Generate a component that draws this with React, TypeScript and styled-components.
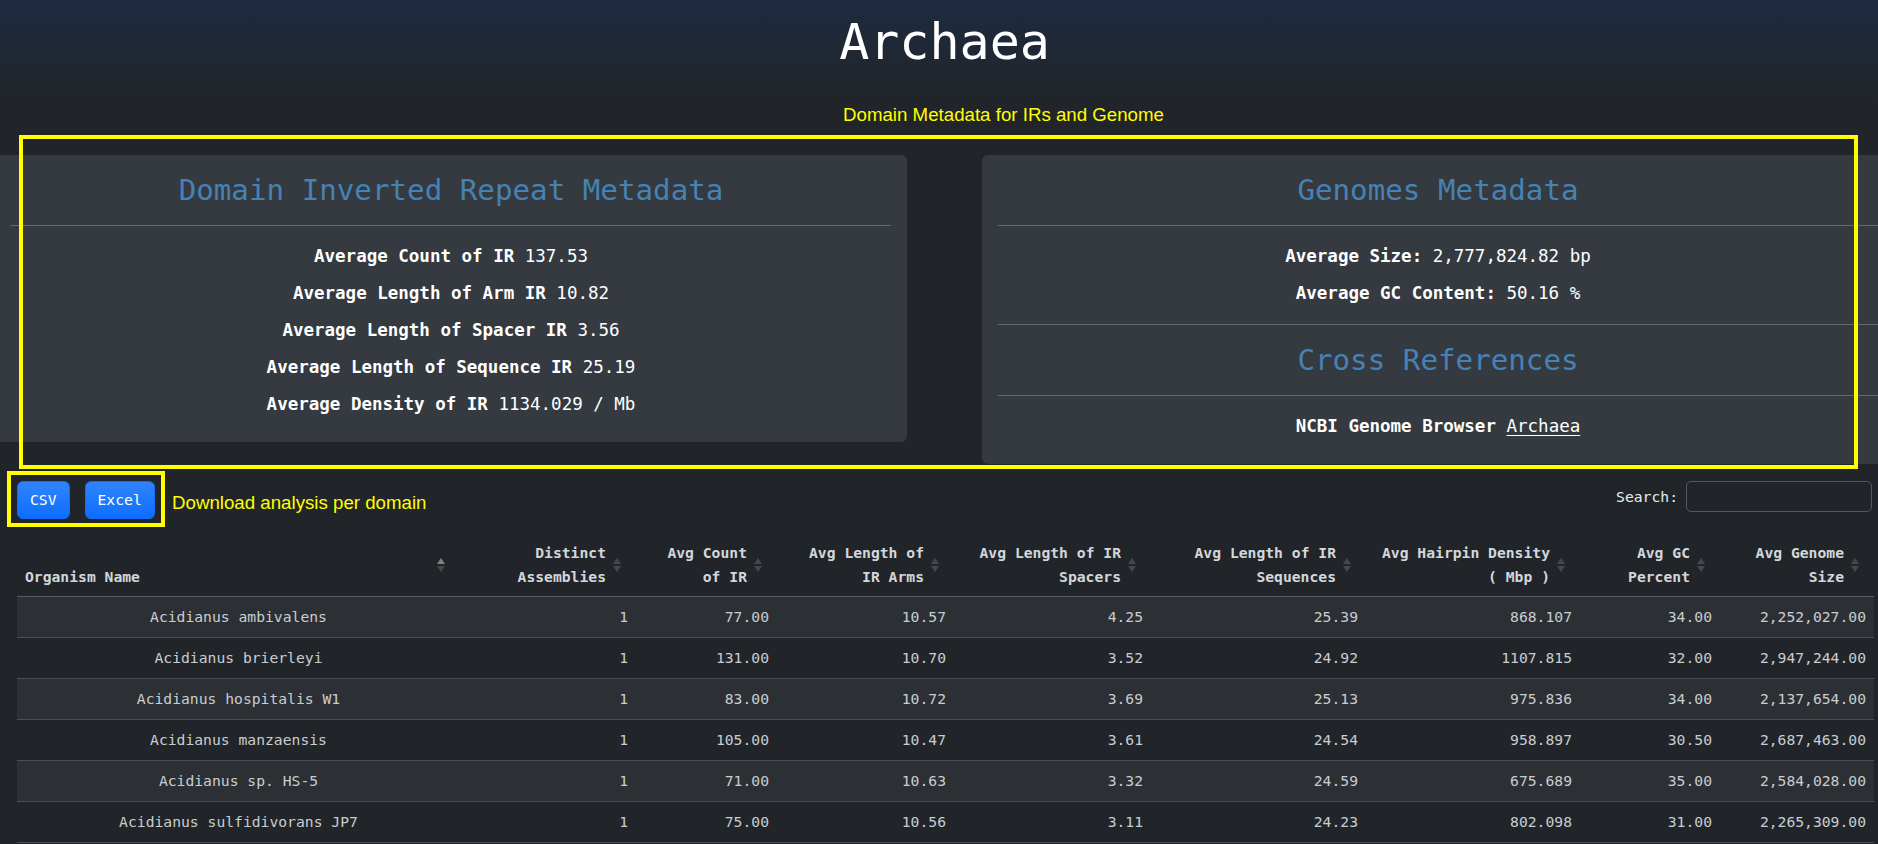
import { FC, Fragment } from 'react'
import styled, { createGlobalStyle } from 'styled-components'

const MONO = `'DejaVu Sans Mono', 'Liberation Mono', monospace`
const NOTE = `'Liberation Sans', Arial, sans-serif`
const YELLOW = '#ffff00'

type Column = { key: string; label: string[]; width: number }

const columns: Column[] = [
  { key: 'name', label: ['Organism Name'], width: 443 },
  { key: 'assemblies', label: ['Distinct', 'Assemblies'], width: 176 },
  { key: 'count', label: ['Avg Count', 'of IR'], width: 141 },
  { key: 'arms', label: ['Avg Length of', 'IR Arms'], width: 177 },
  { key: 'spacers', label: ['Avg Length of IR', 'Spacers'], width: 197 },
  { key: 'sequences', label: ['Avg Length of IR', 'Sequences'], width: 215 },
  { key: 'density', label: ['Avg Hairpin Density', '( Mbp )'], width: 214 },
  { key: 'gc', label: ['Avg GC', 'Percent'], width: 140 },
  { key: 'size', label: ['Avg Genome', 'Size'], width: 154 },
]

const rows: string[][] = [
  ['Acidianus ambivalens', '1', '77.00', '10.57', '4.25', '25.39', '868.107', '34.00', '2,252,027.00'],
  ['Acidianus brierleyi', '1', '131.00', '10.70', '3.52', '24.92', '1107.815', '32.00', '2,947,244.00'],
  ['Acidianus hospitalis W1', '1', '83.00', '10.72', '3.69', '25.13', '975.836', '34.00', '2,137,654.00'],
  ['Acidianus manzaensis', '1', '105.00', '10.47', '3.61', '24.54', '958.897', '30.50', '2,687,463.00'],
  ['Acidianus sp. HS-5', '1', '71.00', '10.63', '3.32', '24.59', '675.689', '35.00', '2,584,028.00'],
  ['Acidianus sulfidivorans JP7', '1', '75.00', '10.56', '3.11', '24.23', '802.098', '31.00', '2,265,309.00'],
]

const irStats = [
  ['Average Count of IR', '137.53'],
  ['Average Length of Arm IR', '10.82'],
  ['Average Length of Spacer IR', '3.56'],
  ['Average Length of Sequence IR', '25.19'],
  ['Average Density of IR', '1134.029 / Mb'],
]

export default function App() {
  return (
    <Screen>
      <GlobalStyle />
      <Page>
        <Header>
          <Title>Archaea</Title>
        </Header>

        <CardRow>
          <Card>
            <CardTitle>Domain Inverted Repeat Metadata</CardTitle>
            <Divider />
            <StatList>
              {irStats.map(([label, value]) => (
                <Stat key={label}>
                  <b>{label}</b> {value}
                </Stat>
              ))}
            </StatList>
          </Card>

          <Card>
            <CardTitle>Genomes Metadata</CardTitle>
            <Divider />
            <StatList>
              <Stat>
                <b>Average Size:</b> 2,777,824.82 bp
              </Stat>
              <Stat>
                <b>Average GC Content:</b> 50.16 %
              </Stat>
            </StatList>
            <Divider $wide />
            <CardTitle>Cross References</CardTitle>
            <Divider />
            <StatList>
              <Stat>
                <b>NCBI Genome Browser</b> <Link href="#">Archaea</Link>
              </Stat>
            </StatList>
          </Card>
        </CardRow>

        <Toolbar>
          <ButtonGroup>
            <ExportButton>CSV</ExportButton>
            <ExportButton>Excel</ExportButton>
          </ButtonGroup>
          <SearchLabel>
            Search:
            <SearchInput type="search" />
          </SearchLabel>
        </Toolbar>

        <ResultsTable />
      </Page>

      <MetadataNote>Domain Metadata for IRs and Genome</MetadataNote>
      <MetadataFrame />
      <DownloadFrame />
      <DownloadNote>Download analysis per domain</DownloadNote>
    </Screen>
  )
}

const ResultsTable: FC = () => (
  <Table>
    <colgroup>
      {columns.map((c) => (
        <col key={c.key} style={{ width: c.width }} />
      ))}
    </colgroup>
    <thead>
      <tr>
        {columns.map((c, i) => (
          <HeadCell key={c.key} $first={i === 0}>
            {c.label.map((line, j) => (
              <Fragment key={line}>
                {j > 0 && <br />}
                {line}
              </Fragment>
            ))}
            <SortIcons>
              <Arrow $up $active={i === 0} />
              <Arrow />
            </SortIcons>
          </HeadCell>
        ))}
      </tr>
    </thead>
    <tbody>
      {rows.map((row) => (
        <Row key={row[0]}>
          {row.map((cell, i) => (
            <Cell key={i} $first={i === 0}>
              {cell}
            </Cell>
          ))}
        </Row>
      ))}
    </tbody>
  </Table>
)

const GlobalStyle = createGlobalStyle`
  html, body {
    margin: 0;
    padding: 0;
    background: #212529;
  }
  body {
    font-family: ${MONO};
    color: #dee2e6;
  }
  *, *::before, *::after {
    box-sizing: border-box;
  }
`

const Screen = styled.div`
  position: relative;
  width: 1878px;
  height: 844px;
  overflow: hidden;
  background: #212529;
`
const Page = styled.div`
  width: 1899px;
  margin-left: -5px;
`
const Header = styled.header`
  height: 155px;
  padding-top: 17px;
  text-align: center;
  background: linear-gradient(180deg, #1d2a3f 0px, #212529 105px, #212529 155px);
`
const Title = styled.h1`
  margin: 0;
  font-family: ${MONO};
  font-size: 50px;
  line-height: 50px;
  font-weight: 400;
  color: #ffffff;
`
const CardRow = styled.div`
  display: grid;
  grid-template-columns: 912px 912px;
  column-gap: 75px;
  align-items: start;
`
const Card = styled.section`
  background: #343a40;
  border-radius: 6px;
  padding: 16px 16px 11px;
  text-align: center;
  color: #ffffff;
`
const CardTitle = styled.h2`
  margin: 0;
  font-family: ${MONO};
  font-size: 29.2px;
  line-height: 38px;
  font-weight: 400;
  color: #4682b4;
`
const Divider = styled.hr<{ $wide?: boolean }>`
  height: 0;
  border: 0;
  border-top: 1px solid rgba(255, 255, 255, 0.25);
  margin: ${(p) => (p.$wide ? '20px 0 16px' : '16px 0')};
`
const StatList = styled.div`
  padding-top: 4px;
`
const Stat = styled.p`
  margin: 0 0 16px;
  font-size: 17.5px;
  line-height: 21px;

  b {
    font-weight: 700;
  }
`
const Link = styled.a`
  color: #ffffff;
  text-decoration: underline;
  text-underline-offset: 3px;
`
const Toolbar = styled.div`
  display: flex;
  justify-content: space-between;
  align-items: flex-start;
  margin-top: 17px;
  padding: 0 22px 0 22px;
`
const ButtonGroup = styled.div`
  display: flex;
  gap: 15px;
`
const ExportButton = styled.button`
  font-family: ${MONO};
  font-size: 14.7px;
  line-height: 24px;
  padding: 6px 12px;
  border: 1px solid #0d6efd;
  border-radius: 6px;
  color: #ffffff;
  background: #0d6efd linear-gradient(180deg, rgba(255, 255, 255, 0.15), rgba(255, 255, 255, 0));
`
const SearchLabel = styled.label`
  display: flex;
  align-items: center;
  gap: 8px;
  height: 31px;
  font-size: 14.7px;
  color: #e9ecef;
`
const SearchInput = styled.input`
  width: 186px;
  height: 31px;
  border: 1px solid #55595e;
  border-radius: 5px;
  background: transparent;
  outline: none;
`
const Table = styled.table`
  width: 1857px;
  margin: 14px 20px 0 22px;
  table-layout: fixed;
  border-collapse: collapse;
  font-family: ${MONO};
  font-size: 14.7px;
`
const HeadCell = styled.th<{ $first?: boolean }>`
  position: relative;
  padding: 8px 30px 7px 8px;
  line-height: 24px;
  vertical-align: bottom;
  text-align: ${(p) => (p.$first ? 'left' : 'right')};
  white-space: nowrap;
  font-weight: 700;
  color: #d3d7db;
  border-bottom: 1px solid #575b60;
`
const SortIcons = styled.span`
  position: absolute;
  right: 15px;
  top: 50%;
  transform: translateY(-50%);
  display: flex;
  flex-direction: column;
  gap: 2px;
`
const Arrow = styled.span<{ $up?: boolean; $active?: boolean }>`
  width: 0;
  height: 0;
  border-left: 4px solid transparent;
  border-right: 4px solid transparent;
  ${(p) => (p.$up ? 'border-bottom' : 'border-top')}: 6px solid
    ${(p) => (p.$active ? 'rgba(255, 255, 255, 0.42)' : 'rgba(255, 255, 255, 0.16)')};
`
const Row = styled.tr`
  &:nth-child(odd) td {
    background: #2c3034;
  }
`
const Cell = styled.td<{ $first?: boolean }>`
  padding: 8px;
  line-height: 24px;
  text-align: ${(p) => (p.$first ? 'center' : 'right')};
  color: #c9cdd1;
  border-bottom: 1px solid #4a4e53;
  white-space: nowrap;
`

// yellow annotations drawn over the screenshot
const Note = styled.div`
  position: absolute;
  font-family: ${NOTE};
  font-size: 18.7px;
  line-height: 22px;
  color: ${YELLOW};
  white-space: nowrap;
`
const MetadataNote = styled(Note)`
  left: 843px;
  top: 104px;
`
const DownloadNote = styled(Note)`
  left: 172px;
  top: 492px;
`
const Frame = styled.div`
  position: absolute;
  border: 4px solid ${YELLOW};
  pointer-events: none;
`
const MetadataFrame = styled(Frame)`
  left: 19px;
  top: 135px;
  width: 1839px;
  height: 334px;
`
const DownloadFrame = styled(Frame)`
  left: 7px;
  top: 471px;
  width: 158px;
  height: 56px;
`
